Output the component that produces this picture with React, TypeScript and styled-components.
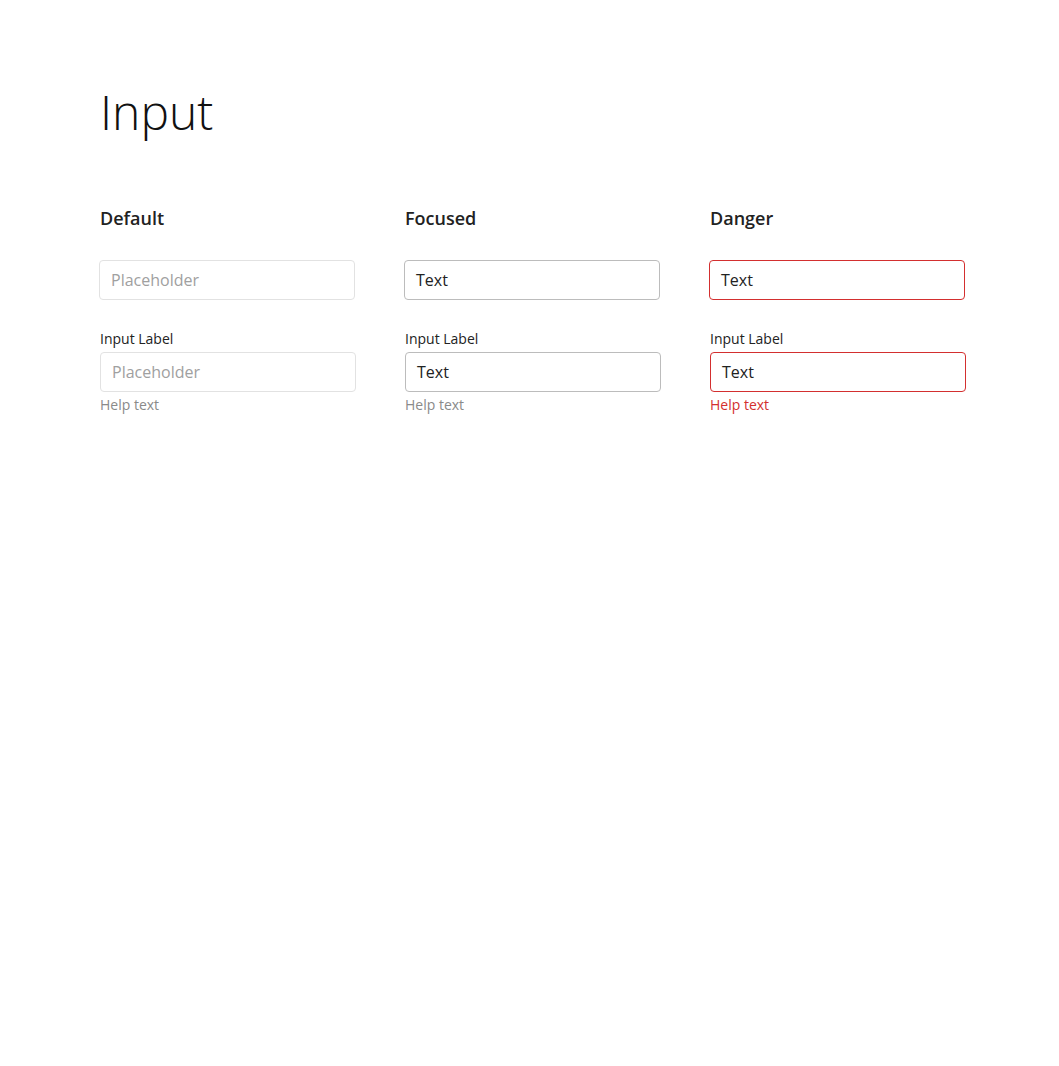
import React from "react";
import styled, { createGlobalStyle, css } from "styled-components";

const Global = createGlobalStyle`
  html, body { margin: 0; padding: 0; background: #fff; }
  body { font-family: "Open Sans", "Noto Sans", sans-serif; color: #222; }
`;

const Page = styled.div`
  padding: 77px 0 0 100px;
`;

const Title = styled.h1`
  margin: 0;
  font-weight: 300;
  font-size: 48px;
  line-height: 70px;
  color: #111;
`;

const Grid = styled.div`
  display: grid;
  grid-template-columns: repeat(3, 256px);
  column-gap: 49px;
  margin-top: 58px;
`;

const Column = styled.div`
  display: flex;
  flex-direction: column;
`;

const Heading = styled.h2`
  margin: 0;
  font-size: 18px;
  font-weight: 600;
  line-height: 26px;
  color: #222;
`;

type Variant = "default" | "focused" | "danger";

const Box = styled.div<{ $variant: Variant; $shift?: boolean }>`
  box-sizing: border-box;
  height: 40px;
  width: 256px;
  border-radius: 4px;
  border: 1px solid #e2e2e2;
  display: flex;
  align-items: center;
  padding: 0 11px;
  font-size: 16px;
  margin-left: ${(p) => (p.$shift ? "-1px" : "0")};
  color: #222;
  ${(p) =>
    p.$variant === "focused" &&
    css`
      border-color: #bcbcbc;
    `}
  ${(p) =>
    p.$variant === "danger" &&
    css`
      border-color: #d32f2f;
    `}
`;

const Placeholder = styled.span`
  color: #a0a0a0;
`;

const Plain = styled.div`
  margin-top: 29px;
`;

const Field = styled.div`
  margin-top: 29px;
  display: flex;
  flex-direction: column;
`;

const Label = styled.label`
  font-size: 14px;
  line-height: 20px;
  color: #222;
  margin-bottom: 3px;
`;

const Help = styled.div<{ $danger?: boolean }>`
  font-size: 14px;
  line-height: 20px;
  margin-top: 3px;
  color: ${(p) => (p.$danger ? "#d32f2f" : "#8a8a8a")};
`;

const cols: { title: string; variant: Variant }[] = [
  { title: "Default", variant: "default" },
  { title: "Focused", variant: "focused" },
  { title: "Danger", variant: "danger" },
];

function Content({ variant }: { variant: Variant }) {
  return variant === "default" ? <Placeholder>Placeholder</Placeholder> : <>Text</>;
}

export default function App() {
  return (
    <Page>
      <Global />
      <Title>Input</Title>
      <Grid>
        {cols.map((c) => (
          <Column key={c.title}>
            <Heading>{c.title}</Heading>
            <Plain>
              <Box $variant={c.variant} $shift>
                <Content variant={c.variant} />
              </Box>
            </Plain>
            <Field>
              <Label>Input Label</Label>
              <Box $variant={c.variant}>
                <Content variant={c.variant} />
              </Box>
              <Help $danger={c.variant === "danger"}>Help text</Help>
            </Field>
          </Column>
        ))}
      </Grid>
    </Page>
  );
}
